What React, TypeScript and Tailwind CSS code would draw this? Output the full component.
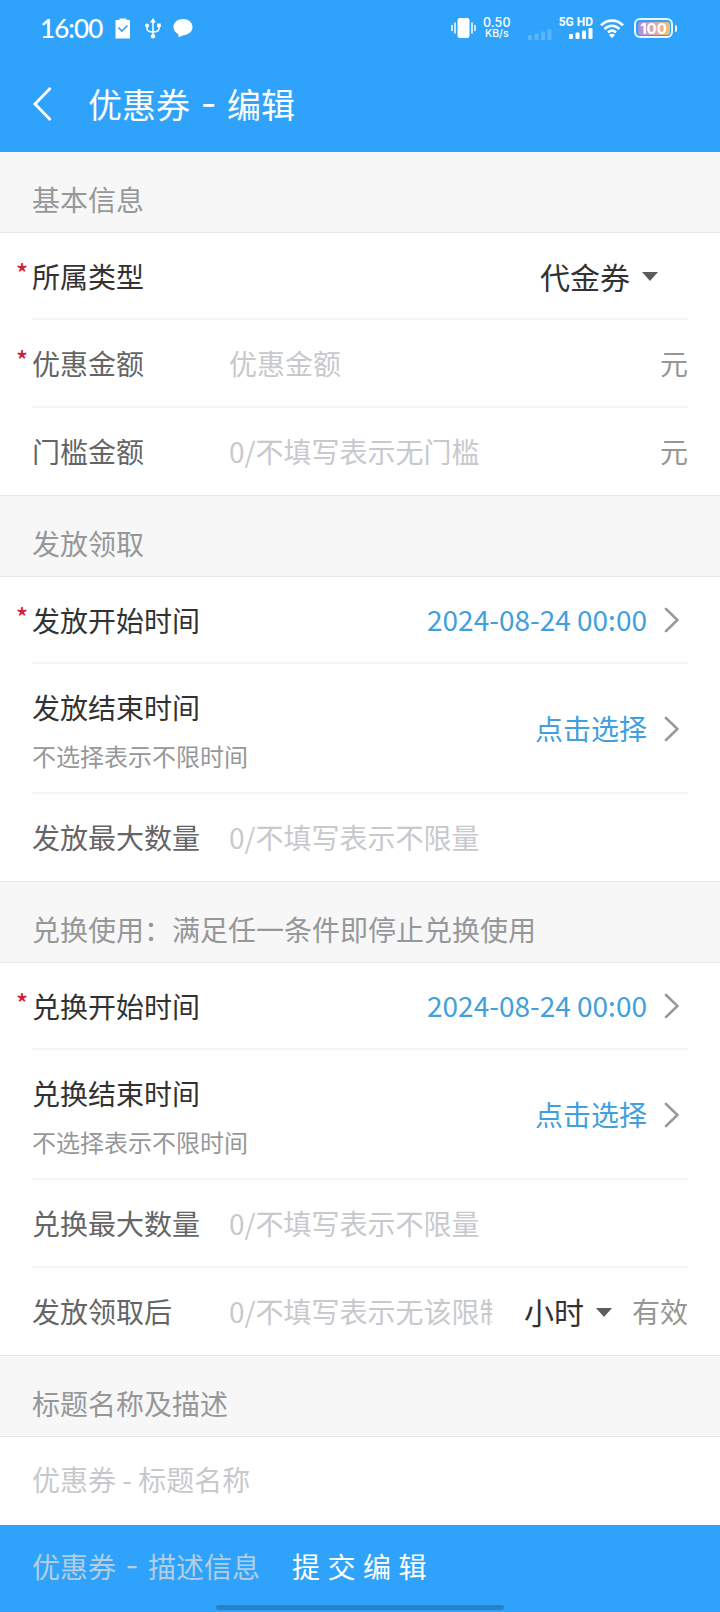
import type { ReactNode } from "react";
import { clsx } from "clsx";

function StatusBar() {
  return (
    <div className="flex h-[56px] items-center pl-[40px] text-white">
      <span className="w-[75px] font-['Lato'] text-[26px] leading-[56px] font-medium tracking-[-0.9px]">
        16:00
      </span>
      {/* clipboard */}
      <svg width="16" height="21" viewBox="0 0 16 21" className="mr-[14px]">
        <path d="M1 2h3.500V0.500h7V2H15v18.500H0.500V2Z" fill="#fff" />
        <path
          d="M3.500 9.500 6.800 13 12.500 7.500"
          fill="none"
          stroke="#2fa3fb"
          strokeWidth="1.700"
        />
      </svg>
      {/* usb */}
      <svg width="16" height="21" viewBox="0 0 16 21" className="mr-[12px]">
        <g fill="none" stroke="#fff" strokeWidth="1.500">
          <path d="M8 3v15M2 9v1.500c0 2.500 2 3.500 6 3.500s6-1 6-3.500V8" />
        </g>
        <g fill="#fff">
          <path d="M8 0l3 4.500H5Z" />
          <circle cx="2" cy="7.500" r="1.900" />
          <path d="M12.200 5.500h3.600v3.600h-3.600Z" />
          <circle cx="8" cy="18.300" r="2.200" />
        </g>
      </svg>
      {/* message */}
      <svg width="20" height="20" viewBox="0 0 21 20">
        <path
          d="M10.500 0.500C16 0.500 20.500 4 20.500 9S16 17.500 10.800 17.500L6 19.800 5.500 16.500C2.500 15 0.500 12.300 0.500 9c0-5 4.500-8.500 10-8.500Z"
          fill="#fff"
        />
      </svg>

      <div className="ml-auto flex items-center pr-[43px]">
        {/* vibrate */}
        <svg width="25" height="20" viewBox="0 0 25 20" className="mr-[7px]">
          <rect x="6.500" y="0" width="12" height="20" rx="2.500" fill="#fff" />
          <path
            d="M4 5v10M1 7.500v5M21 5v10M24 7.500v5"
            stroke="#fff"
            strokeWidth="1.500"
            strokeLinecap="round"
          />
        </svg>
        <div className="w-[45px] font-['Inter'] leading-[11px] font-medium">
          <div className="text-[12.500px] tracking-[0.1px]">0.50</div>
          <div className="pl-[2px] text-[10.500px]">KB/s</div>
        </div>
        <svg
          width="24"
          height="11"
          viewBox="0 0 24 11"
          className="mt-[12px] mr-[8px]"
        >
          <g fill="#5cb5f9">
            <rect x="0" y="6" width="4" height="5" rx="1" />
            <rect x="6.500" y="4.500" width="4" height="6.500" rx="1" />
            <rect x="13" y="2.500" width="4" height="8.500" rx="1" />
            <rect x="19.500" y="0" width="4" height="11" rx="1" />
          </g>
        </svg>
        <div className="mr-[7px] flex w-[33px] flex-col items-end">
          <span className="font-['Roboto'] text-[12px] leading-[11px] font-bold whitespace-nowrap">
            5G HD
          </span>
          <svg width="24" height="11" viewBox="0 0 24 11">
            <g fill="#fff">
              <rect x="0" y="6" width="4" height="5" rx="1" />
              <rect x="6.500" y="4.500" width="4" height="6.500" rx="1" />
              <rect x="13" y="2.500" width="4" height="8.500" rx="1" />
              <rect x="19.500" y="0" width="4" height="11" rx="1" />
            </g>
          </svg>
        </div>
        {/* wifi */}
        <svg width="24" height="19" viewBox="0 0 24 19" className="mr-[10px]">
          <g fill="none" stroke="#fff" strokeWidth="2.600">
            <path d="M1 6.300C7 0 17 0 23 6.300" />
            <path d="M4.500 10c4.500-4.300 10.500-4.300 15 0" />
            <path d="M8 13.500c2.500-2.300 5.500-2.300 8 0" />
          </g>
          <path d="M12 19l-3-3c2-1.600 4-1.600 6 0Z" fill="#fff" />
        </svg>
        {/* battery */}
        <div className="flex h-[20px] w-[39px] items-center justify-center rounded-[6px] border-2 border-white/90 p-[1.500px]">
          <div className="flex h-full w-full items-center justify-center rounded-[3px] bg-linear-to-r from-[#a58fe0] via-[#dba9b4] to-[#f3c063]">
            <span className="font-['Inter'] text-[15px] leading-none font-bold">
              100
            </span>
          </div>
        </div>
        <div className="ml-[1.500px] h-[7px] w-[2.500px] rounded-r-full bg-white" />
      </div>
    </div>
  );
}

function Chevron() {
  return (
    <svg width="15" height="26" viewBox="0 0 15 26" className="mt-px mr-[9px]">
      <path
        d="M2 2 13.500 13 2 24"
        fill="none"
        stroke="#999"
        strokeWidth="2.600"
        strokeLinecap="round"
      />
    </svg>
  );
}

function Caret() {
  return (
    <svg width="16" height="9" viewBox="0 0 16 9" className="mt-[2px]">
      <path d="M0 0h16L8 9Z" fill="#5c5c5c" />
    </svg>
  );
}

function SectionTitle({ children, first }: { children: ReactNode; first?: boolean }) {
  return (
    <div
      className={clsx(
        "h-[81px] border-b border-[#e8e8e8] bg-[#f7f7f8] pt-[33px] pl-[32px] leading-[28px] text-[#969799]",
        !first && "shadow-[0_-1px_0_#e8e8e8]",
      )}
    >
      {children}
    </div>
  );
}

type RowProps = {
  label: string;
  required?: boolean;
  dark?: boolean;
  placeholder?: string;
  height?: string;
  last?: boolean;
  children?: ReactNode;
};

function Row({ label, required, dark, placeholder, height = "h-[88px]", last, children }: RowProps) {
  return (
    <div className={clsx("px-[32px]", height)}>
      <div
        className={clsx(
          "relative flex h-full items-center",
          last ? "pb-[2px]" : "border-b-2 border-[#f5f5f6]",
        )}
      >
        {required && (
          <span className="absolute top-[25px] left-[-16px] text-[25px] leading-[28px] font-medium text-[#cf1f35]">
            *
          </span>
        )}
        <span
          className={clsx(
            "w-[197px] shrink-0",
            dark ? "text-[#323233]" : "text-[#646566]",
          )}
        >
          {label}
        </span>
        {placeholder && (
          <span className="min-w-0 flex-1 overflow-hidden whitespace-nowrap text-[#c8c9cc]">
            {placeholder}
          </span>
        )}
        {children}
      </div>
    </div>
  );
}

function Unit({ children }: { children: ReactNode }) {
  return <span className="shrink-0 text-[#969696]">{children}</span>;
}

function TimeValue({ children }: { children: ReactNode }) {
  return (
    <div className="ml-auto flex items-center gap-[17px] text-[#409fdc]">
      <span className="pb-px">{children}</span>
      <Chevron />
    </div>
  );
}

function EndTimeRow({ label, height }: { label: string; height: string }) {
  return (
    <div className={clsx("px-[32px]", height)}>
      <div className="flex h-full items-center border-b-2 border-[#f5f5f6]">
        <div className="pt-[6px]">
          <div className="leading-[48px] text-[#323233]">{label}</div>
          <div className="text-[24px] leading-[49px] text-[#969799]">
            不选择表示不限时间
          </div>
        </div>
        <TimeValue>点击选择</TimeValue>
      </div>
    </div>
  );
}

export default function App() {
  return (
    <div className="flex h-[1612px] w-[720px] flex-col overflow-hidden bg-white font-['Noto_Sans_CJK_SC',sans-serif] text-[28px] leading-[40px]">
      <header className="h-[152px] shrink-0 bg-[#2fa3fb]">
        <StatusBar />
        <div className="flex h-[96px] items-center pl-[32px] text-white">
          <svg width="20" height="36" viewBox="0 0 20 36" className="mr-[36px]">
            <path
              d="M18.500 2 3 18 18.500 34"
              fill="none"
              stroke="#fff"
              strokeWidth="2.800"
            />
          </svg>
          <h1 className="flex text-[34px]">
            优惠券
            <span className="w-[37px] text-center font-['Inter']">-</span>
            编辑
          </h1>
        </div>
      </header>

      <SectionTitle first>基本信息</SectionTitle>
      <Row label="所属类型" required dark height="h-[87px]">
        <div className="mr-[30px] ml-auto flex items-center gap-[12px] text-[30px] text-[#323233]">
          代金券
          <Caret />
        </div>
      </Row>
      <Row label="优惠金额" required placeholder="优惠金额">
        <Unit>元</Unit>
      </Row>
      <Row label="门槛金额" placeholder="0/不填写表示无门槛" last>
        <Unit>元</Unit>
      </Row>

      <SectionTitle>发放领取</SectionTitle>
      <Row label="发放开始时间" required dark height="h-[87px]">
        <TimeValue>2024-08-24 00:00</TimeValue>
      </Row>
      <EndTimeRow label="发放结束时间" height="h-[130px]" />
      <Row label="发放最大数量" placeholder="0/不填写表示不限量" last />

      <SectionTitle>兑换使用：满足任一条件即停止兑换使用</SectionTitle>
      <Row label="兑换开始时间" required dark height="h-[87px]">
        <TimeValue>2024-08-24 00:00</TimeValue>
      </Row>
      <EndTimeRow label="兑换结束时间" height="h-[130px]" />
      <Row label="兑换最大数量" placeholder="0/不填写表示不限量" />
      <Row label="发放领取后" placeholder="0/不填写表示无该限制" last>
        <div className="mr-[20px] ml-[32px] flex shrink-0 items-center gap-[12px] text-[30px] text-[#323233]">
          小时
          <Caret />
        </div>
        <Unit>有效</Unit>
      </Row>

      <SectionTitle>标题名称及描述</SectionTitle>
      <div className="flex h-[88px] items-center px-[32px] pb-[4px] text-[#c8c9cc]">
        优惠券 - 标题名称
      </div>

      <footer className="relative flex h-[87px] shrink-0 items-center bg-[#2fa3fb] pb-[5px] pl-[32px]">
        <span className="flex w-[260px] text-[#b4cde2]">
          优惠券
          <span className="w-[32px] text-center font-['Inter']">-</span>
          描述信息
        </span>
        <span className="tracking-[7.500px] text-white">提交编辑</span>
        <div className="absolute bottom-[2px] left-[216px] h-[5px] w-[288px] rounded-full bg-[#2882c6]" />
      </footer>
    </div>
  );
}
